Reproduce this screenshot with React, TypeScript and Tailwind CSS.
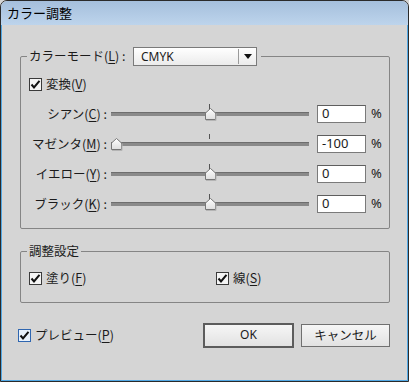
import React from 'react';

const font = { fontFamily: '"Noto Sans CJK JP", "Noto Sans", sans-serif' };

// Win-style checkbox
function Check({ focus = false }: { focus?: boolean }) {
  return (
    <span
      className={
        'inline-flex w-[13px] h-[13px] shrink-0 items-center justify-center border ' +
        (focus ? 'border-[#2f66b0] bg-[#e8f1fb]' : 'border-[#3a3a3a] bg-[#f4f4f4]')
      }
    >
      <svg width="11" height="11" viewBox="0 0 11 11">
        <path d="M1.5 5.5 L4 8.5 L9.5 1.8" fill="none" stroke="#111" strokeWidth="2" />
      </svg>
    </span>
  );
}

function Key({ k }: { k: string }) {
  return (
    <>
      (<span className="underline underline-offset-2">{k}</span>)
    </>
  );
}

interface Row {
  label: string;
  k: string;
  value: string;
  pos: number; // 0..1 position of thumb
}

const rows: Row[] = [
  { label: 'シアン', k: 'C', value: '0', pos: 0.5 },
  { label: 'マゼンタ', k: 'M', value: '-100', pos: 0 },
  { label: 'イエロー', k: 'Y', value: '0', pos: 0.5 },
  { label: 'ブラック', k: 'K', value: '0', pos: 0.5 },
];

function Slider({ pos }: { pos: number }) {
  // track 198px, thumb 11px
  const left = Math.round(pos * (198 - 11));
  return (
    <div className="relative w-[198px] h-[18px]">
      <div className="absolute left-[98px] top-[-1px] w-px h-[5px] bg-[#555]" />
      <div className="absolute left-0 right-0 top-[7px] h-[4px] bg-[#8a8a8a] border-t border-[#6e6e6e]" />
      <svg
        className="absolute top-[3px]"
        style={{ left }}
        width="12"
        height="13"
        viewBox="0 0 12 13"
      >
        <defs>
          <linearGradient id="thumb" x1="0" y1="0" x2="0" y2="1">
            <stop offset="0" stopColor="#ffffff" />
            <stop offset="1" stopColor="#dedede" />
          </linearGradient>
        </defs>
        <path d="M0.5 5 L5.5 0.5 L10.5 5 L10.5 11.5 L0.5 11.5 Z" fill="url(#thumb)" stroke="#777" />
        <path d="M1 12.5 H11 V5.5" fill="none" stroke="#b4b4b4" />
      </svg>
    </div>
  );
}

export default function App() {
  return (
    <div className="w-[409px] h-[382px] overflow-hidden bg-[#d5d5d5] text-[12.5px] text-[#1b1b1b]" style={font}>
      <div className="h-full flex flex-col border border-[#2a2a2a] rounded-t-[7px] overflow-hidden">
        {/* Title bar */}
        <div className="h-[24px] shrink-0 flex items-center px-[6px] text-[13px] bg-gradient-to-b from-[#a5bfdc] to-[#bdd4ec] text-black">
          カラー調整
        </div>

        {/* Body */}
        <div className="flex-1 flex flex-col bg-[#d5d5d5] border-x border-b border-[#52a8e4] pl-[18px] pr-[17px] pt-[22px]">
          {/* Color mode group */}
          <fieldset className="border border-[#858585] rounded-[2px] pl-[6px] pt-[10px] pb-[15px]">
            <legend className="px-[2px] pr-[4px]">
              <div className="flex items-center h-[19px]">
                <span className="w-[104px] whitespace-nowrap">
                  カラーモード<Key k="L" /> :
                </span>
                <div className="w-[124px] h-[19px] flex items-center border border-[#7a7a7a] bg-gradient-to-b from-[#ffffff] to-[#ebebeb]">
                  <span className="flex-1 pl-[7px] text-[12px]" style={{ fontFamily: '"Noto Sans", sans-serif' }}>
                    CMYK
                  </span>
                  <span className="w-px h-[15px] bg-[#9a9a9a]" />
                  <span className="w-[17px] flex justify-center">
                    <svg width="8" height="5" viewBox="0 0 8 5">
                      <path d="M0 0 H8 L4 5 Z" fill="#111" />
                    </svg>
                  </span>
                </div>
              </div>
            </legend>

            <div className="pl-[2px] flex flex-col">
              <div className="flex items-center gap-[4px] h-[16px]">
                <Check />
                <span>
                  変換<Key k="V" />
                </span>
              </div>

              <div className="flex flex-col gap-[12px] mt-[13px]">
                {rows.map((r) => (
                  <div key={r.k} className="flex items-center h-[18px]">
                    <span className="w-[78px] flex justify-end whitespace-nowrap">
                      <span>
                        {r.label}
                        <Key k={r.k} /> :
                      </span>
                    </span>
                    <div className="ml-[4px]">
                      <Slider pos={r.pos} />
                    </div>
                    <div
                      className="ml-[8px] w-[49px] h-[18px] bg-white border border-[#7a7a7a] border-t-[#5e5e5e] flex items-center pl-[4px] text-[13px]"
                      style={{ fontFamily: '"Noto Sans", sans-serif' }}
                    >
                      {r.value}
                    </div>
                    <span className="ml-[5px] text-[13px]" style={{ fontFamily: '"Noto Sans", sans-serif' }}>
                      %
                    </span>
                  </div>
                ))}
              </div>
            </div>
          </fieldset>

          {/* Adjust settings group */}
          <fieldset className="mt-[13px] border border-[#858585] rounded-[2px] pl-[6px] pt-[10px] pb-[15px]">
            <legend className="px-[2px]">調整設定</legend>
            <div className="pl-[2px] flex items-center h-[16px]">
              <div className="w-[187px] flex items-center gap-[4px]">
                <Check />
                <span>
                  塗り<Key k="F" />
                </span>
              </div>
              <div className="flex items-center gap-[4px]">
                <Check />
                <span>
                  線<Key k="S" />
                </span>
              </div>
            </div>
          </fieldset>

          {/* Bottom row */}
          <div className="mt-[20px] flex items-center">
            <div className="ml-[-2px] flex items-center gap-[4px]">
              <Check focus />
              <span>
                プレビュー<Key k="P" />
              </span>
            </div>
            <div className="ml-auto flex items-center gap-[7px]">
              <button
                className="w-[91px] h-[25px] border-2 border-[#5c5c5c] bg-gradient-to-b from-[#f6f6f6] to-[#e2e2e2] text-[12px]"
                style={{ fontFamily: '"Noto Sans", sans-serif' }}
              >
                OK
              </button>
              <button className="w-[89px] h-[23px] border border-[#707070] bg-gradient-to-b from-[#f6f6f6] to-[#e2e2e2] text-[12.5px]">
                キャンセル
              </button>
            </div>
          </div>
        </div>
      </div>
    </div>
  );
}
